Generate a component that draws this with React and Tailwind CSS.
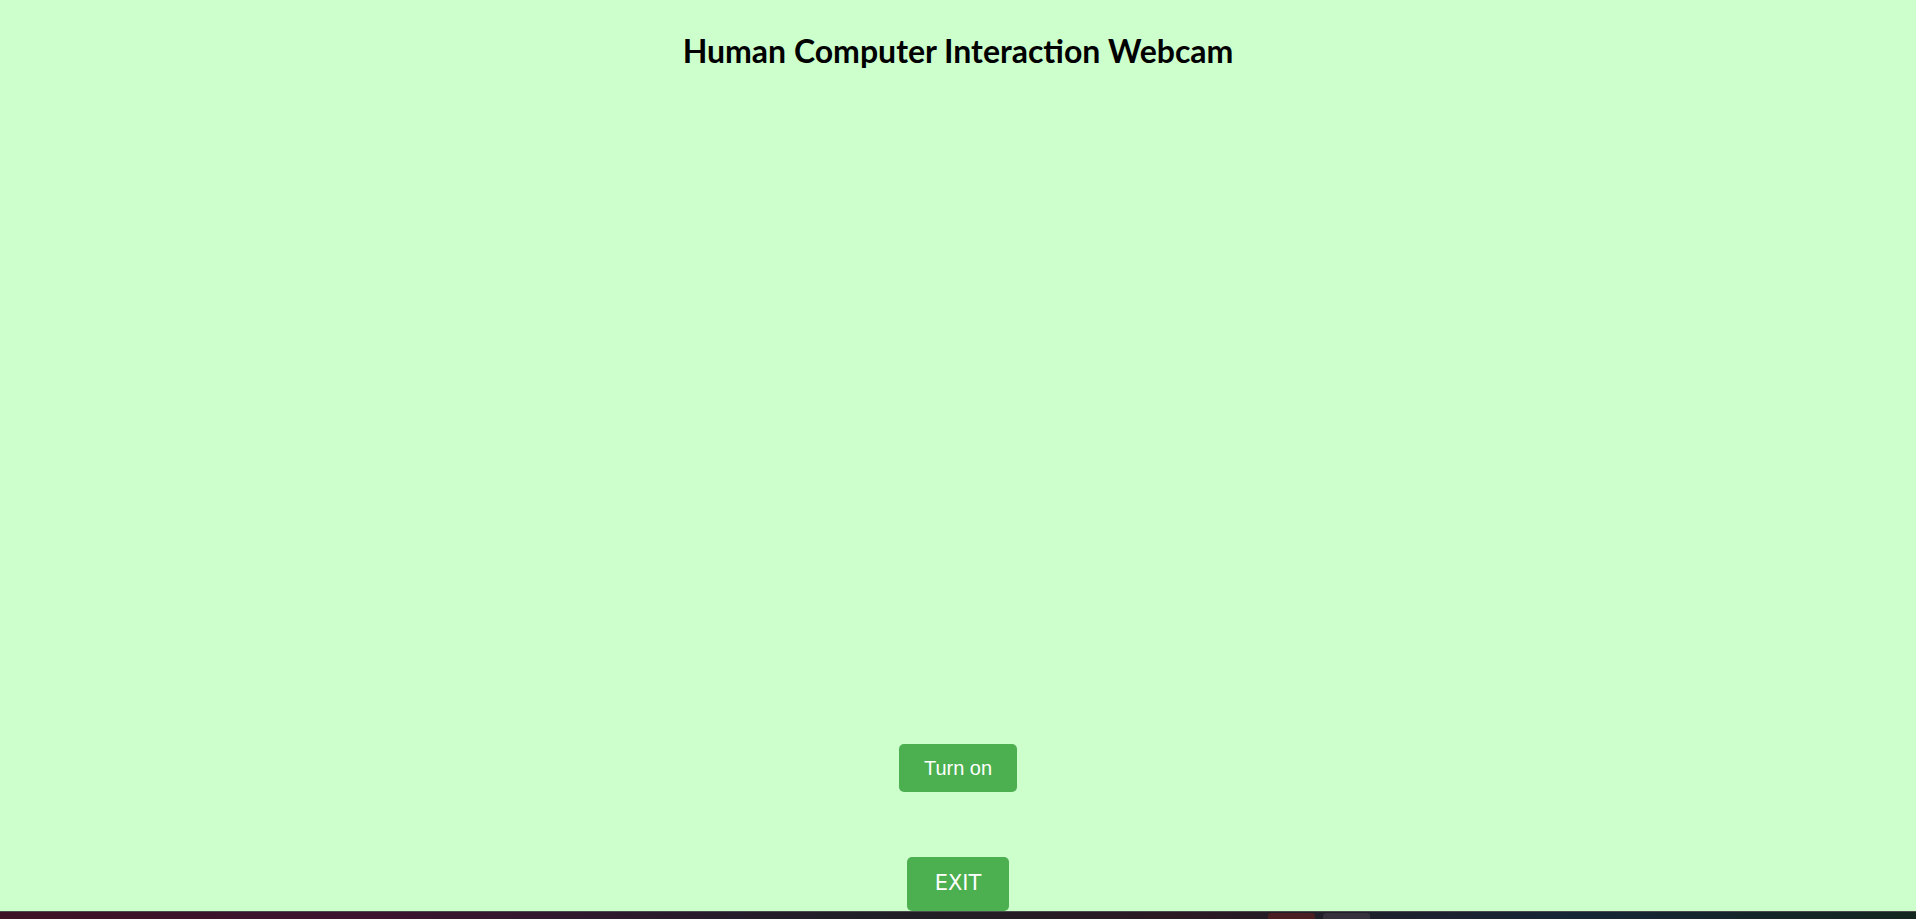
export default function App() {
  return (
    <div className="flex h-screen flex-col bg-[#ccffcc] overflow-hidden">
      <div className="flex justify-center pt-[33px]">
        <h1 className="text-[32px] leading-[36px] font-bold text-black [font-family:'Comic_Sans_MS',Lato,sans-serif]">
          Human Computer Interaction Webcam
        </h1>
      </div>

      <div className="mt-[675px] flex justify-center">
        <button className="h-[48px] w-[118px] rounded-[5px] bg-[#4caf50] text-[20px] text-white [font-family:'Liberation_Sans',Arial,sans-serif]">
          Turn on
        </button>
      </div>

      <div className="mt-[65px] flex justify-center">
        <button className="h-[54px] w-[102px] rounded-[5px] bg-[#4caf50] text-[21px] text-white [font-family:'DejaVu_Sans',sans-serif]">
          EXIT
        </button>
      </div>

      <div className="relative h-[8px] border-t border-[#4a4a4a] bg-[linear-gradient(90deg,#3e1226_0%,#3c1430_20%,#2a1a2c_35%,#201f27_45%,#2c1822_62%,#1f1f2a_70%,#162536_82%,#13261f_100%)]">
        <div className="absolute left-[1268px] top-[1px] h-[7px] w-[47px] rounded-t-[3px] bg-[#4a1e22]" />
        <div className="absolute left-[1323px] top-[1px] h-[7px] w-[47px] rounded-t-[3px] bg-[#36313c]" />
      </div>
    </div>
  );
}
